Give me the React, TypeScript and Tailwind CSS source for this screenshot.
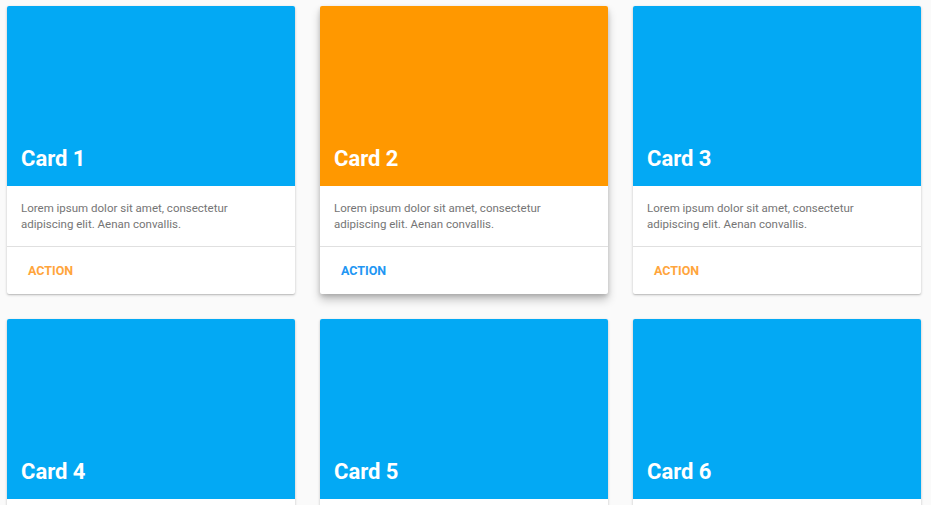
const CARDS = [
  { title: "Card 1", color: "bg-[#03a9f4]", action: "text-[#ffa53c]", raised: false },
  { title: "Card 2", color: "bg-[#ff9800]", action: "text-[#2196f3]", raised: true },
  { title: "Card 3", color: "bg-[#03a9f4]", action: "text-[#ffa53c]", raised: false },
  { title: "Card 4", color: "bg-[#03a9f4]", action: "text-[#ffa53c]", raised: false },
  { title: "Card 5", color: "bg-[#03a9f4]", action: "text-[#ffa53c]", raised: false },
  { title: "Card 6", color: "bg-[#03a9f4]", action: "text-[#ffa53c]", raised: false },
];

function Card({
  title,
  color,
  action,
  raised,
}: {
  title: string;
  color: string;
  action: string;
  raised: boolean;
}) {
  return (
    <div
      className={
        raised
          ? "bg-white rounded-[2px] overflow-hidden shadow-[0_6px_10px_rgba(0,0,0,0.22),0_2px_4px_rgba(0,0,0,0.16)]"
          : "bg-white rounded-[2px] overflow-hidden shadow-[0_1px_3px_rgba(0,0,0,0.2),0_1px_1px_rgba(0,0,0,0.1)]"
      }
    >
      <div className={`${color} h-[180px] flex items-end px-[14px] pb-[15px]`}>
        <h2 className="text-white text-[22px] leading-[24px] font-bold">{title}</h2>
      </div>
      <p className="px-[14px] py-[14px] text-[11.5px] leading-[16px] text-[#757575]">
        Lorem ipsum dolor sit amet, consectetur
        <br />
        adipiscing elit. Aenan convallis.
      </p>
      <div className="border-t border-[#e0e0e0] h-[48px] flex items-center pl-[21px]">
        <span className={`${action} text-[12.5px] leading-[16px] font-bold`}>ACTION</span>
      </div>
    </div>
  );
}

export default function App() {
  return (
    <div className="min-h-screen bg-[#fafafa] pl-[7px] pt-[6px] font-['Roboto',sans-serif]">
      <div className="grid grid-cols-[288px_288px_288px] gap-[25px]">
        {CARDS.map((c) => (
          <Card key={c.title} {...c} />
        ))}
      </div>
    </div>
  );
}
